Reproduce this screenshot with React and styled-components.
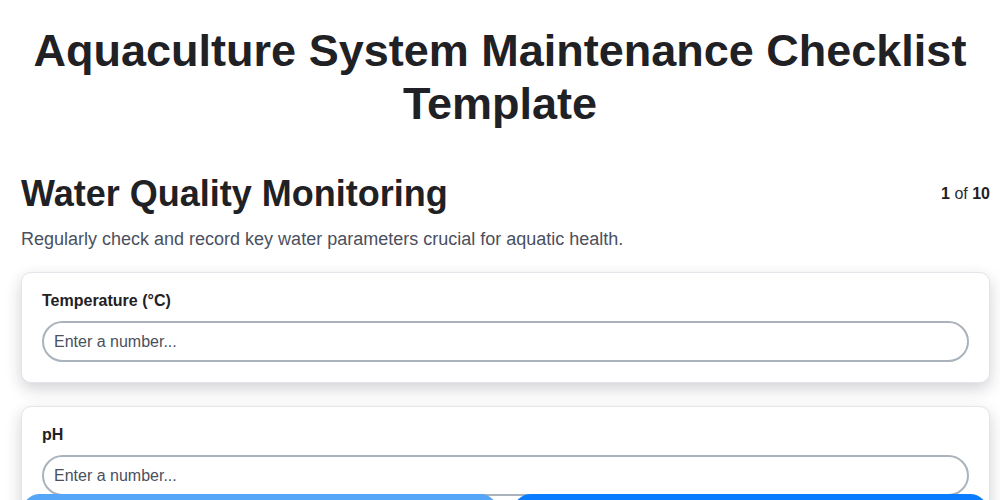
import styled, { createGlobalStyle } from "styled-components";

const GlobalStyle = createGlobalStyle`
  * { box-sizing: border-box; }
  body {
    margin: 0;
    background: #ffffff;
    font-family: "Liberation Sans", Arial, sans-serif;
    color: #1f2125;
  }
`;

const Page = styled.div`
  min-height: 100vh;
  padding-bottom: 80px;
`;

const Title = styled.h1`
  margin: 0;
  padding: 24px 20px 0;
  font-size: 45px;
  line-height: 53px;
  font-weight: 700;
  text-align: center;
  color: #1f2125;
`;

const Section = styled.section`
  padding: 43px 10px 0 21px;
`;

const SectionHeader = styled.div`
  display: flex;
  justify-content: space-between;
  align-items: flex-start;
`;

const SectionTitle = styled.h2`
  margin: 0;
  font-size: 36px;
  line-height: 42px;
  font-weight: 700;
  color: #1f2125;
`;

const Counter = styled.div`
  font-size: 16px;
  line-height: 18px;
  padding-top: 12px;
  color: #2a2d33;
  b { font-weight: 700; color: #1f2125; }
`;

const Description = styled.p`
  margin: 12px 0 0;
  font-size: 18px;
  line-height: 24px;
  color: #4a5060;
`;

const FieldList = styled.div`
  display: flex;
  flex-direction: column;
  gap: 23px;
  margin-top: 21px;
`;

const Card = styled.div`
  background: #fff;
  border: 1px solid #e4e4ea;
  border-radius: 10px;
  box-shadow: 0 6px 16px rgba(30, 30, 50, 0.2);
  padding: 18px 20px 20px;
  width: 969px;
`;

const Label = styled.label`
  display: block;
  font-size: 16px;
  font-weight: 700;
  line-height: 20px;
  color: #1f2125;
  margin-bottom: 10px;
`;

const NumberInput = styled.input`
  display: block;
  width: 100%;
  height: 41px;
  border: 2px solid #aab2bb;
  border-radius: 21px;
  padding: 0 10px;
  font-family: "Liberation Sans", Arial, sans-serif;
  font-size: 16px;
  color: #1f2125;
  background: #fff;
  outline: none;
  &::placeholder { color: #4a5060; opacity: 1; }
`;

const Footer = styled.div`
  position: fixed;
  left: 22px;
  right: 12px;
  bottom: -30px;
  display: grid;
  grid-template-columns: 1fr 1fr;
  gap: 15px;
`;

const NavButton = styled.button`
  height: 36px;
  border: none;
  border-radius: 24px;
  background: ${(p) => (p.$primary ? "#0a7cff" : "#55a5f8")};
  color: #fff;
  font-family: "Liberation Sans", Arial, sans-serif;
  font-size: 16px;
`;

const fields = [
  { label: "Temperature (°C)" },
  { label: "pH" },
];

export default function App() {
  return (
    <Page>
      <GlobalStyle />
      <Title>Aquaculture System Maintenance Checklist Template</Title>
      <Section>
        <SectionHeader>
          <SectionTitle>Water Quality Monitoring</SectionTitle>
          <Counter>
            <b>1</b> of <b>10</b>
          </Counter>
        </SectionHeader>
        <Description>
          Regularly check and record key water parameters crucial for aquatic health.
        </Description>
        <FieldList>
          {fields.map((f) => (
            <Card key={f.label}>
              <Label>{f.label}</Label>
              <NumberInput type="number" placeholder="Enter a number..." />
            </Card>
          ))}
        </FieldList>
      </Section>
      <Footer>
        <NavButton aria-label="Previous" />
        <NavButton $primary aria-label="Next" />
      </Footer>
    </Page>
  );
}
